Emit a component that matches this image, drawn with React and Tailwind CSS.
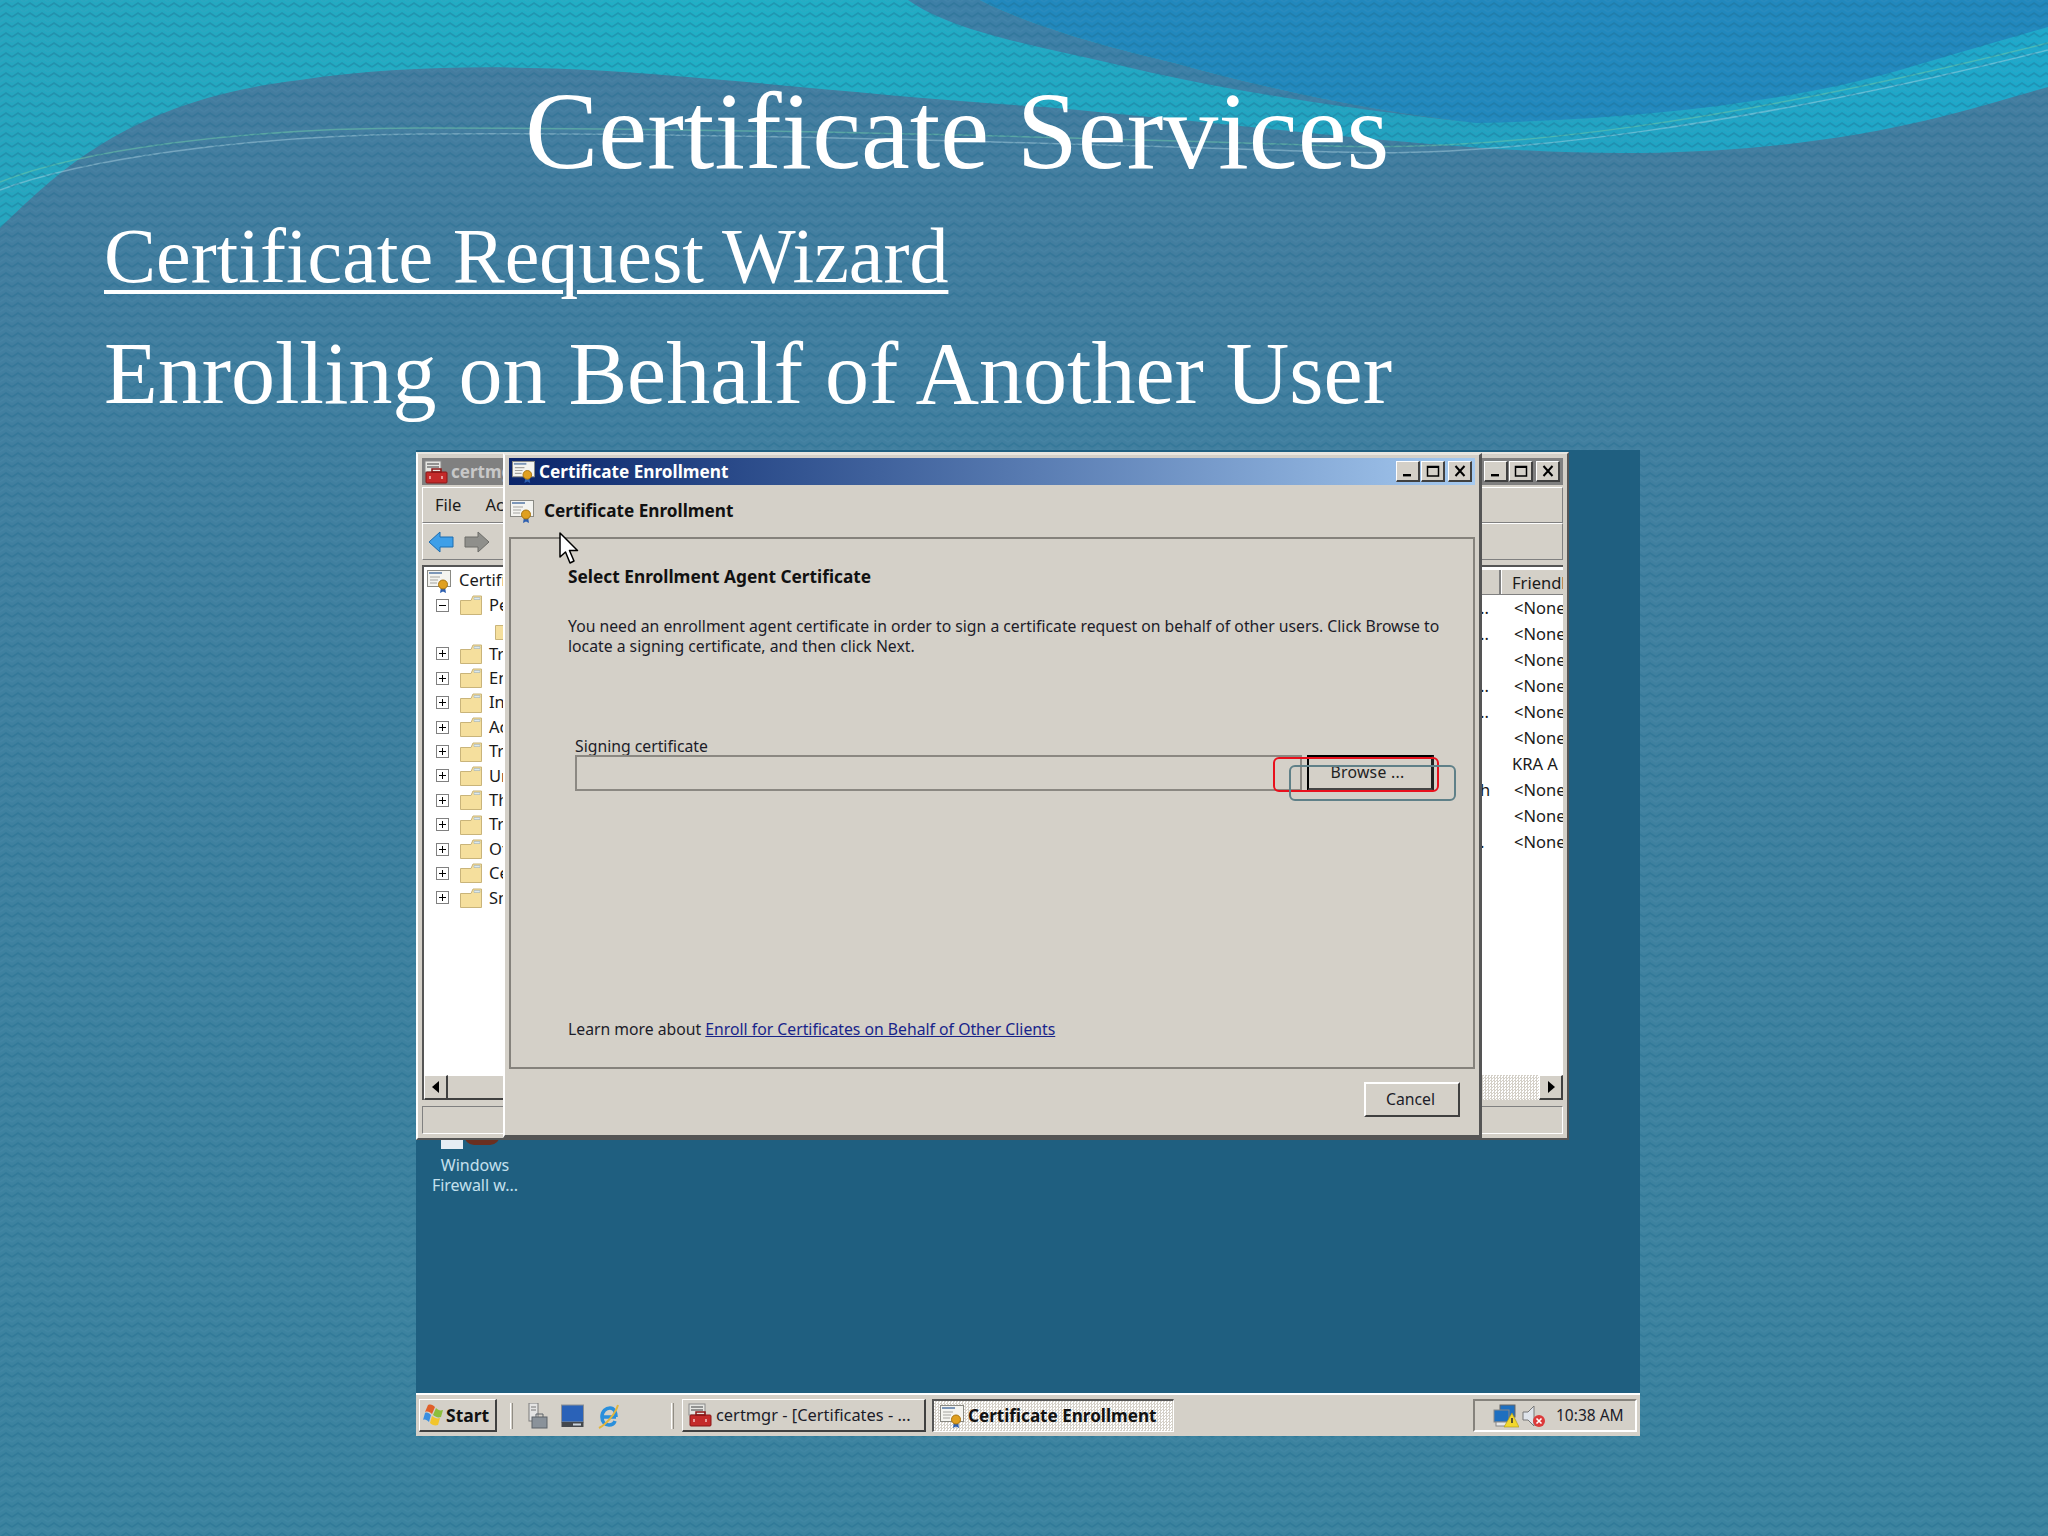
import React from 'react';

const CertIcon = ({ className }) => (
  <svg viewBox="0 0 24 24" className={className}>
    <rect x="0.5" y="1.5" width="23" height="16" fill="#f4f4f0" stroke="#8a8a84" />
    <rect x="2" y="3" width="13" height="2" fill="#7d97b8" />
    <path d="M3 8h10M3 11h8M3 14h7" stroke="#a3a3a0" strokeWidth="1.2" />
    <path d="M14 18l-1 6 3-1.5 3 1.5-1-6z" fill="#2d5fb0" />
    <circle cx="16" cy="15.5" r="4.5" fill="#e0a020" stroke="#a87410" />
  </svg>
);

const ToolboxIcon = ({ className }) => (
  <svg viewBox="0 0 24 24" className={className}>
    <rect x="1" y="1" width="16" height="11" fill="#e6e6e2" stroke="#8a8a8a" />
    <path d="M3 4h12M3 7h12" stroke="#777" strokeWidth="1.3" />
    <rect x="2" y="12" width="21" height="11" rx="1" fill="#c42a2a" stroke="#8a1616" />
    <rect x="8" y="9" width="9" height="3" fill="none" stroke="#8a1616" strokeWidth="1.5" />
    <path d="M6 16v3M18 16v3" stroke="#f4c0c0" strokeWidth="1.5" />
  </svg>
);

const FolderIcon = () => (
  <svg viewBox="0 0 22 20" className="h-5 w-[22px] shrink-0">
    <path d="M0.5 5.5V19.5H21.5V1H13L11 5.5Z" fill="#f5df9d" stroke="#c9b47a" />
    <path d="M14 2.5h6v2h-6z" fill="#dce8ee" stroke="#93a9b4" strokeWidth="0.5" />
  </svg>
);

const Expander = ({ open }) => (
  <span className="relative flex h-[13px] w-[13px] shrink-0 items-center justify-center border border-[#808080] bg-white">
    <span className="h-px w-[7px] bg-black" />
    {!open && <span className="absolute h-[7px] w-px bg-black" />}
  </span>
);

const WinButton = ({ type }) => (
  <span className="flex h-[21px] w-[24px] items-center justify-center border-t border-l border-t-white border-l-white border-r-2 border-b-2 border-r-[#404040] border-b-[#404040] bg-[#d4d0c8]">
    <svg viewBox="0 0 14 12" className="h-3 w-[14px]">
      {type === 'min' && <rect x="2" y="9" width="8" height="2.4" fill="#000" />}
      {type === 'max' && <path d="M1.5 1.5h11v9.5h-11z M1.5 2.2h11" fill="none" stroke="#000" strokeWidth="1.5" />}
      {type === 'close' && <path d="M2.5 1l9 10M11.5 1l-9 10" stroke="#000" strokeWidth="2" />}
    </svg>
  </span>
);

const WinControls = () => (
  <div className="flex items-center gap-[1px]">
    <WinButton type="min" />
    <WinButton type="max" />
    <span className="w-px" />
    <WinButton type="close" />
  </div>
);

const treeRows = [
  { label: 'Pe', open: true },
  { label: '', child: true },
  { label: 'Tr' },
  { label: 'En' },
  { label: 'In' },
  { label: 'Ac' },
  { label: 'Tr' },
  { label: 'Un' },
  { label: 'Th' },
  { label: 'Tr' },
  { label: 'Ot' },
  { label: 'Ce' },
  { label: 'Sm' },
];

const friendlyRows = [
  { side: '..', name: '<None' },
  { side: '..', name: '<None' },
  { side: '', name: '<None' },
  { side: '..', name: '<None' },
  { side: '..', name: '<None' },
  { side: '', name: '<None' },
  { side: '', name: 'KRA A', kra: true },
  { side: 'h', name: '<None' },
  { side: '', name: '<None' },
  { side: '.', name: '<None' },
];

const Backdrop = () => (
  <svg viewBox="0 0 2048 1536" className="absolute inset-0 h-[1536px] w-[2048px]">
    <defs>
      <pattern id="weave" width="12" height="10" patternUnits="userSpaceOnUse">
        <path d="M0 7L6 3L12 7" fill="none" stroke="#1c6a8c" strokeOpacity="0.35" strokeWidth="1.6" />
        <path d="M0 2L6 -2L12 2" fill="none" stroke="#5a96b8" strokeOpacity="0.15" strokeWidth="1.4" />
        <path d="M0 12L6 8L12 12" fill="none" stroke="#5a96b8" strokeOpacity="0.15" strokeWidth="1.4" />
      </pattern>
      <linearGradient id="body" x1="0" y1="0" x2="0" y2="1">
        <stop offset="0" stopColor="#447c9f" />
        <stop offset="0.45" stopColor="#3f809f" />
        <stop offset="1" stopColor="#3b839f" />
      </linearGradient>
      <linearGradient id="teal" x1="0" y1="0" x2="1" y2="0">
        <stop offset="0" stopColor="#25a6bf" />
        <stop offset="0.35" stopColor="#20b0c6" />
        <stop offset="0.7" stopColor="#22a2c0" />
        <stop offset="1" stopColor="#1ea9cb" />
      </linearGradient>
    </defs>
    <rect width="2048" height="1536" fill="url(#body)" />
    <path d="M0 0H2048V87C1960 112 1850 150 1640 153C1480 155 1300 130 1045 107C930 100 820 88 700 78C560 65 420 62 300 80C130 100 60 170 0 228Z" fill="url(#teal)" />
    <path d="M908 0C950 30 1030 45 1110 63C1240 95 1380 112 1476 123C1380 112 1280 92 1175 63C1120 50 1040 30 980 0Z" fill="#3d7fa6" />
    <path d="M980 0C1040 30 1120 50 1175 63C1280 92 1380 112 1476 123C1620 120 1780 105 1900 70C1960 52 2010 38 2048 27V0Z" fill="#2188bd" />
    <path d="M0 182C80 150 240 128 420 128C700 128 1000 135 1306 145C1500 155 1740 120 2048 43" fill="none" stroke="#6cc6a8" strokeOpacity="0.55" strokeWidth="1.5" />
    <path d="M0 190C80 160 240 136 420 134C700 132 1000 142 1340 152C1500 158 1750 125 2048 50" fill="none" stroke="#b2d8e4" strokeOpacity="0.45" strokeWidth="1.5" />
    <rect width="2048" height="1536" fill="url(#weave)" />
  </svg>
);

const BackWindow = () => (
  <div className="absolute left-0 top-[2px] flex h-[688px] w-[1153px] flex-col border-t-2 border-l-2 border-t-[#e8e6e0] border-l-white border-r-2 border-b-2 border-r-[#555] border-b-[#555] bg-[#d4d0c8] p-1">
    <div className="flex h-[27px] shrink-0 items-center justify-between bg-[#808080] pl-[2px] pr-[3px]">
      <div className="flex items-center gap-[3px]">
        <ToolboxIcon className="h-[24px] w-[24px]" />
        <span className="text-[17px] font-bold text-[#c8c8c8]">certmgr</span>
      </div>
      <WinControls />
    </div>
    <div className="mt-[2px] flex h-[36px] shrink-0 items-center gap-[24px] border border-t-white border-l-white border-r-[#808080] border-b-[#808080] pl-[12px] text-[16.5px] text-[#1a1a1a]">
      <span>File</span>
      <span>Action</span>
    </div>
    <div className="flex h-[37px] shrink-0 items-center gap-[10px] border border-t-white border-l-white border-r-[#808080] border-b-[#808080] pl-[5px]">
      <svg viewBox="0 0 26 22" className="h-[22px] w-[26px]">
        <path d="M1 11L12 1V6H25V16H12V21Z" fill="#3f9fe8" stroke="#1d6cb0" />
      </svg>
      <svg viewBox="0 0 26 22" className="h-[22px] w-[26px]">
        <path d="M25 11L14 1V6H1V16H14V21Z" fill="#8f8f8b" stroke="#6c6c68" />
      </svg>
    </div>
    <div className="mt-[5px] flex min-h-0 flex-1 flex-col border-t-2 border-l-2 border-t-[#555] border-l-[#555] bg-white">
      <div className="flex min-h-0 flex-1 justify-between overflow-hidden">
        <div className="w-[110px] pt-[1px] text-[16.5px] text-[#1a1a1a]">
          <div className="flex h-[25px] items-center gap-[8px] pl-[3px]">
            <CertIcon className="h-[24px] w-[24px] shrink-0" />
            <span>Certificates</span>
          </div>
          {treeRows.map((row, i) => (
            <div key={i} className={row.child ? 'flex h-[24.4px] items-center pl-[71px]' : 'flex h-[24.4px] items-center pl-[12px]'}>
              {!row.child && <Expander open={row.open} />}
              {!row.child && <span className="w-[11px] shrink-0" />}
              <FolderIcon />
              {row.label && <span className="pl-[7px]">{row.label}</span>}
            </div>
          ))}
        </div>
        <div className="w-[84px] shrink-0 overflow-hidden pt-[3px] text-[16.5px] text-[#1a1a1a]">
          <div className="flex h-[25px] border-b border-b-[#808080] bg-[#d4d0c8]">
            <span className="w-[22px] shrink-0 border-r-2 border-r-[#808080]" />
            <span className="whitespace-nowrap border-l border-l-white pl-[10px] leading-[25px]">Friendl</span>
          </div>
          {friendlyRows.map((row, i) => (
            <div key={i} className="flex h-[26px] items-center whitespace-nowrap">
              <span className="w-[22px] shrink-0 pl-[1px]">{row.side}</span>
              <span className={row.kra ? 'pl-[11px]' : 'pl-[13px]'}>{row.name}</span>
            </div>
          ))}
        </div>
      </div>
      <div className="flex h-[25px] shrink-0 bg-[#d4d0c8]">
        <div className="flex w-[24px] items-center justify-center border-t border-l border-t-white border-l-white border-r-2 border-b-2 border-r-[#404040] border-b-[#404040]">
          <svg viewBox="0 0 8 12" className="h-3 w-2"><path d="M7 0V12L0 6Z" fill="#000" /></svg>
        </div>
        <div className="w-[100px] border-t border-t-white border-b-2 border-b-[#404040]" />
        <div className="flex-1 bg-[repeating-conic-gradient(#d4d0c8_0_25%,#ffffff_0_50%)] bg-[length:3px_3px]" />
        <div className="flex w-[24px] items-center justify-center border-t border-l border-t-white border-l-white border-r-2 border-b-2 border-r-[#404040] border-b-[#404040]">
          <svg viewBox="0 0 8 12" className="h-3 w-2"><path d="M1 0V12L8 6Z" fill="#000" /></svg>
        </div>
      </div>
    </div>
    <div className="mt-[6px] h-[28px] shrink-0 border border-t-[#808080] border-l-[#808080] border-r-white border-b-white" />
  </div>
);

const Dialog = () => (
  <div className="absolute left-[87px] top-[3px] flex h-[685px] w-[979px] flex-col border-t-2 border-l-2 border-t-[#e8e6e0] border-l-white border-r-[3px] border-b-[3px] border-r-[#555] border-b-[#555] bg-[#d4d0c8] px-1 pt-[3px]">
    <div className="flex h-[27px] shrink-0 items-center justify-between bg-gradient-to-r from-[#0a246a] to-[#a6caf0] pl-[3px] pr-[3px]">
      <div className="flex items-center gap-[4px]">
        <CertIcon className="h-[23px] w-[23px]" />
        <span className="text-[17.2px] font-bold text-white">Certificate Enrollment</span>
      </div>
      <WinControls />
    </div>
    <div className="flex h-[52px] shrink-0 items-center gap-[10px] pl-px">
      <CertIcon className="h-[24px] w-[24px]" />
      <span className="text-[17.2px] font-bold text-[#111]">Certificate Enrollment</span>
    </div>
    <div className="flex h-[532px] shrink-0 flex-col border-2 border-[#85827c] pl-[57px] pt-[28px] text-[15.75px] leading-[20px] text-[#1c1c28]">
      <h3 className="text-[17.3px] font-bold text-[#111]">Select Enrollment Agent Certificate</h3>
      <p className="mt-[29px] w-[890px]">
        You need an enrollment agent certificate in order to sign a certificate request on behalf of other users. Click Browse to
        <br />
        locate a signing certificate, and then click Next.
      </p>
      <div className="mt-[80px] pl-[7px]">Signing certificate</div>
      <div className="relative ml-[7px] mt-[-1px] flex h-[36px] gap-[5px]">
        <div className="w-[727px] border-2 border-[#8b8882]" />
        <div className="flex w-[127px] items-center justify-center border-t-2 border-l-2 border-t-black border-l-black border-r-[3px] border-b-[3px] border-r-[#222] border-b-[#444] pb-[2px] pr-[5px] tracking-[0.3px] text-[#222]">
          Browse ...
        </div>
        <div className="absolute left-[698px] top-[2px] h-[35px] w-[166px] rounded-[6px] border-2 border-[#e8101c]" />
        <div className="absolute left-[714px] top-[10px] h-[36px] w-[167px] rounded-[6px] border-2 border-[#5f8088]" />
      </div>
      <div className="mb-[28px] mt-auto">
        Learn more about{' '}
        <span className="text-[#18248a] underline">Enroll for Certificates on Behalf of Other Clients</span>
      </div>
    </div>
    <div className="flex flex-1 items-start justify-end pr-[15px] pt-[13px]">
      <div className="flex h-[35px] w-[96px] items-center justify-center border-t-2 border-l-2 border-t-white border-l-white border-r-2 border-b-2 border-r-[#404040] border-b-[#404040] pr-[3px] text-[15.75px] text-[#1c1c28]">
        Cancel
      </div>
    </div>
  </div>
);

const Taskbar = () => (
  <div className="flex h-[43px] shrink-0 items-center border-t-2 border-t-white bg-[#d4d0c8] pl-[3px] pr-[3px]">
    <div className="flex h-[33px] w-[78px] items-center gap-[1px] border-t border-l border-t-white border-l-white border-r-2 border-b-2 border-r-[#404040] border-b-[#404040] pl-[3px] text-[17.5px] font-bold text-[#111]">
      <svg viewBox="0 0 22 24" className="h-6 w-[22px] shrink-0">
        <path d="M5 2C8 1 10 2 12 4L9 11C7 9 5 8 2 9Z" fill="#e0602a" />
        <path d="M13 5C15 7 17 8 20 7L18 14C15 15 13 14 10 12Z" fill="#8cbe3c" />
        <path d="M2 10C4 9 6 10 8 12L6 19C4 17 2 16 0 17Z" fill="#3a8fe0" />
        <path d="M9 13C12 15 14 16 17 15L15 22C12 23 9 22 7 20Z" fill="#f2c52c" />
      </svg>
      Start
    </div>
    <span className="ml-[13px] h-[26px] w-[3px] border-l border-r border-l-white border-r-[#908c84]" />
    <div className="ml-[12px] flex items-center gap-[13px]">
      <svg viewBox="0 0 23 26" className="h-[26px] w-[23px]">
        <rect x="4" y="0" width="9" height="18" fill="#e4e4e4" stroke="#7a7a7a" />
        <path d="M6 4h5M6 7h5" stroke="#777" />
        <rect x="7" y="14" width="15" height="11" fill="#8a929a" stroke="#5c6268" />
        <path d="M11 14v-3h7v3" fill="none" stroke="#5c6268" />
      </svg>
      <svg viewBox="0 0 23 24" className="h-6 w-[23px]">
        <rect x="0.5" y="1" width="22" height="17" fill="#2a62b8" stroke="#8b8f93" />
        <rect x="0.5" y="18" width="22" height="5" fill="#44484c" />
        <rect x="12" y="19.5" width="8" height="2" fill="#c9d1d9" />
      </svg>
      <svg viewBox="0 0 23 26" className="h-[26px] w-[23px]">
        <path d="M19 14H5M5 14C5 8 9 5 13 5C17 5 19 9 19 14M5 14C5 19 8 22 12 22C15 22 17 21 18 18" fill="none" stroke="#2a8fdc" strokeWidth="3.6" />
        <path d="M2 25C8 22 18 12 21 2" fill="none" stroke="#e2b53c" strokeWidth="2" />
      </svg>
    </div>
    <span className="ml-[51px] h-[26px] w-[3px] border-l border-r border-l-white border-r-[#908c84]" />
    <div className="ml-[8px] flex h-[33px] w-[244px] items-center gap-[4px] border-t border-l border-t-white border-l-white border-r-2 border-b-2 border-r-[#404040] border-b-[#404040] pl-[5px] text-[16.4px] text-[#1c1c28]">
      <ToolboxIcon className="h-[24px] w-[24px] shrink-0" />
      <span className="whitespace-nowrap">certmgr - [Certificates - ...</span>
    </div>
    <div className="ml-[6px] flex h-[33px] w-[242px] items-center gap-[4px] border-t-2 border-l-2 border-t-[#555] border-l-[#555] border-r border-b border-r-white border-b-white bg-[repeating-conic-gradient(#d4d0c8_0_25%,#ffffff_0_50%)] bg-[length:3px_3px] pl-[6px] text-[17.1px] font-bold text-[#111]">
      <CertIcon className="h-[24px] w-[24px] shrink-0" />
      <span className="whitespace-nowrap">Certificate Enrollment</span>
    </div>
    <div className="ml-auto flex h-[33px] w-[164px] items-center border-t-2 border-l-2 border-t-[#85827c] border-l-[#85827c] border-r-2 border-b-2 border-r-white border-b-white pl-[18px] text-[15.5px] text-[#1c1c28]">
      <svg viewBox="0 0 26 24" className="h-6 w-[26px] shrink-0">
        <rect x="7" y="1" width="15" height="12" fill="#1e6fc0" stroke="#666" />
        <rect x="1" y="6" width="15" height="12" fill="#1e6fc0" stroke="#888" />
        <rect x="3" y="18" width="12" height="4" fill="#e8e8e8" stroke="#888" />
        <path d="M19 9L26 23H11Z" fill="#f2d72c" stroke="#a89410" strokeWidth="0.6" />
        <path d="M19 14v5" stroke="#333" strokeWidth="1.6" />
      </svg>
      <svg viewBox="0 0 26 24" className="ml-[2px] h-6 w-[26px] shrink-0">
        <path d="M2 8H7L13 2V22L7 16H2Z" fill="#dfe4ea" stroke="#777" />
        <circle cx="18" cy="17" r="6" fill="#dc3a3a" />
        <path d="M15.5 14.5l5 5M20.5 14.5l-5 5" stroke="#fff" strokeWidth="1.6" />
      </svg>
      <span className="ml-[9px] whitespace-nowrap">10:38 AM</span>
    </div>
  </div>
);

const Desktop = () => (
  <div className="relative ml-[416px] mt-[26px] flex h-[986px] w-[1224px] flex-col justify-end bg-[#1f5f80] font-['Noto_Sans',sans-serif]">
    <div className="absolute left-[25px] top-[685px] flex items-start gap-[1px]">
      <div className="h-[14px] w-[22px] bg-[#e6edf4]" />
      <div className="h-[10px] w-[36px] rounded-b-[14px] bg-[#6a2f20]" />
    </div>
    <div className="absolute left-[0px] top-[705px] w-[118px] text-center text-[16px] leading-[20px] text-[#c4e0ee]">
      Windows
      <br />
      Firewall w...
    </div>
    <BackWindow />
    <Dialog />
    <svg viewBox="0 0 20 33" className="absolute left-[143px] top-[82px] h-[33px] w-5">
      <path d="M1 1V25L6.5 20L11 31L15 29L10.5 18.5H18.5Z" fill="#fff" stroke="#000" strokeWidth="1.5" strokeLinejoin="round" />
    </svg>
    <Taskbar />
  </div>
);

export default function App() {
  return (
    <div className="relative h-[1536px] w-[2048px] overflow-hidden font-['Liberation_Serif',serif] text-white">
      <Backdrop />
      <div className="relative flex flex-col">
        <h1 className="ml-[525px] mt-[66px] whitespace-nowrap text-[110px] leading-[130px]">Certificate Services</h1>
        <h2 className="ml-[104px] mt-[10px] whitespace-nowrap text-[78px] leading-[100px] underline decoration-[4px] underline-offset-[8px]">Certificate Request Wizard</h2>
        <p className="ml-[104px] mt-[18px] whitespace-nowrap text-[88px] leading-[100px]">Enrolling on Behalf of Another User</p>
        <Desktop />
      </div>
    </div>
  );
}
